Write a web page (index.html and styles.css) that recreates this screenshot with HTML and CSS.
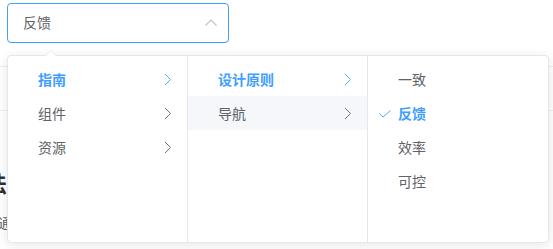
FILE: index.html
```html
<!DOCTYPE html>
<html lang="zh">
<head>
<meta charset="utf-8">
<link rel="stylesheet" href="styles.css">
</head>
<body>
<div class="page">
  <div class="cascader">
    <span class="value">反馈</span>
    <svg class="caret" width="14" height="14" viewBox="0 0 14 14"><path d="M1.5 9.5 L7 4 L12.5 9.5" fill="none" stroke="#C0C4CC" stroke-width="1.2"/></svg>
  </div>
  <div class="backdrop">
    <div class="rule"></div>
    <div class="rule second"></div>
    <div class="heading">方法</div>
    <div class="small">普通</div>
  </div>
  <div class="panel">
    <div class="arrow"></div>
    <div class="menu">
      <div class="node active"><span class="label">指南</span><svg class="chev" width="8" height="13" viewBox="0 0 8 13"><path d="M1 1 L6.5 6.5 L1 12" fill="none" stroke="currentColor" stroke-width="0.9"/></svg></div>
      <div class="node"><span class="label">组件</span><svg class="chev" width="8" height="13" viewBox="0 0 8 13"><path d="M1 1 L6.5 6.5 L1 12" fill="none" stroke="currentColor" stroke-width="0.9"/></svg></div>
      <div class="node"><span class="label">资源</span><svg class="chev" width="8" height="13" viewBox="0 0 8 13"><path d="M1 1 L6.5 6.5 L1 12" fill="none" stroke="currentColor" stroke-width="0.9"/></svg></div>
    </div>
    <div class="menu">
      <div class="node active"><span class="label">设计原则</span><svg class="chev" width="8" height="13" viewBox="0 0 8 13"><path d="M1 1 L6.5 6.5 L1 12" fill="none" stroke="currentColor" stroke-width="0.9"/></svg></div>
      <div class="node hover"><span class="label">导航</span><svg class="chev" width="8" height="13" viewBox="0 0 8 13"><path d="M1 1 L6.5 6.5 L1 12" fill="none" stroke="currentColor" stroke-width="0.9"/></svg></div>
    </div>
    <div class="menu last">
      <div class="node"><span class="label">一致</span></div>
      <div class="node active"><svg class="check" width="12" height="8" viewBox="0 0 12 8"><path d="M0.5 3.5 L4 7 L11.5 0.5" fill="none" stroke="currentColor" stroke-width="0.9"/></svg><span class="label">反馈</span></div>
      <div class="node"><span class="label">效率</span></div>
      <div class="node"><span class="label">可控</span></div>
    </div>
  </div>
</div>
</body>
</html>
```

FILE: styles.css
```css
html, body {
  margin: 0;
  padding: 0;
  background: #fff;
  overflow: hidden;
}
body {
  width: 553px;
  height: 249px;
  font-family: "Helvetica Neue", "Liberation Sans", "Noto Sans CJK SC", sans-serif;
  font-size: 14px;
  color: #606266;
}
.page {
  position: relative;
  width: 553px;
  height: 249px;
  padding: 3px 0 0 7px;
  box-sizing: border-box;
}
.cascader {
  width: 222px;
  height: 40px;
  box-sizing: border-box;
  border: 1px solid #409EFF;
  border-radius: 4px;
  display: flex;
  align-items: center;
  justify-content: space-between;
  padding: 0 10px 0 15px;
  background: #fff;
}
.value {
  line-height: 1;
  color: #606266;
}
.caret {
  display: block;
  margin-bottom: 1px;
}
.backdrop {
  position: absolute;
  left: 0;
  top: 0;
  width: 553px;
  height: 249px;
  z-index: 0;
}
.rule {
  position: absolute;
  left: 0;
  right: 0;
  top: 66px;
  height: 1px;
  background: #EBEEF5;
}
.rule.second {
  top: 110px;
}
.heading {
  position: absolute;
  left: -37px;
  top: 166px;
  font-size: 22px;
  font-weight: bold;
  color: #303133;
}
.small {
  position: absolute;
  left: -16px;
  top: 212px;
  font-size: 14px;
  color: #606266;
}
.panel {
  position: absolute;
  left: 7px;
  top: 55px;
  z-index: 2;
  display: flex;
  background: #fff;
  border: 1px solid #E4E7ED;
  border-radius: 4px;
  box-shadow: 0 2px 12px 0 rgba(0, 0, 0, 0.1);
  height: 188px;
  box-sizing: border-box;
}
.arrow {
  position: absolute;
  left: 37px;
  top: -6px;
  width: 0;
  height: 0;
  border-left: 6px solid transparent;
  border-right: 6px solid transparent;
  border-bottom: 6px solid #E4E7ED;
}
.arrow::after {
  content: "";
  position: absolute;
  left: -6px;
  top: 1px;
  border-left: 6px solid transparent;
  border-right: 6px solid transparent;
  border-bottom: 6px solid #fff;
}
.menu {
  width: 180px;
  box-sizing: border-box;
  border-right: 1px solid #E4E7ED;
  padding: 6px 0;
}
.menu.last {
  border-right: none;
}
.node {
  position: relative;
  display: flex;
  align-items: center;
  height: 34px;
  padding: 0 30px 0 20px;
  box-sizing: border-box;
  color: #606266;
}
.menu.last .node {
  padding-right: 20px;
}
.node.active {
  color: #409EFF;
  font-weight: bold;
}
.node.hover {
  background: #F5F7FA;
}
.label {
  flex: 1;
  padding: 0 10px;
  white-space: nowrap;
}
.chev {
  position: absolute;
  right: 15px;
  top: 11px;
  color: #606266;
}
.node.active .chev {
  color: #409EFF;
}
.check {
  position: absolute;
  left: 11px;
  top: 14px;
}
```
